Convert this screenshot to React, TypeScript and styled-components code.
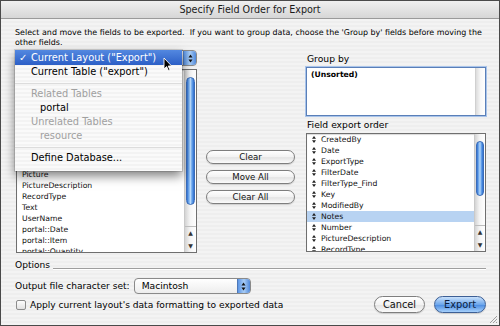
import styled, { createGlobalStyle } from "styled-components";

const GlobalStyle = createGlobalStyle`
  html, body {
    margin: 0;
    padding: 0;
    background: #3a3a3a;
  }
  * {
    box-sizing: border-box;
  }
`;

const FONT = `"DejaVu Sans", "Open Sans", sans-serif`;

const Window = styled.div`
  position: relative;
  width: 500px;
  height: 326px;
  border: 1px solid #4a4a4a;
  display: flex;
  flex-direction: column;
  font-family: ${FONT};
  color: #000;
  overflow: hidden;
  background: repeating-linear-gradient(
    to bottom,
    #eeeeee 0px,
    #eeeeee 2px,
    #f3f3f3 2px,
    #f3f3f3 4px
  );
`;

const TitleBar = styled.div`
  height: 18px;
  line-height: 18px;
  text-align: center;
  font-size: 9.6px;
  color: #1a1a1a;
  background: linear-gradient(to bottom, #f0f0f0, #d6d6d6);
  border-bottom: 1px solid #9a9a9a;
`;

const Body = styled.div`
  flex: 1;
  padding: 9px 13px 0 14px;
  display: flex;
  flex-direction: column;
`;

const Intro = styled.p`
  margin: 0;
  font-size: 7.95px;
  line-height: 10px;
  white-space: nowrap;
`;

const Columns = styled.div`
  display: flex;
  margin-top: 2px;
`;

const LeftColumn = styled.div`
  position: relative;
  width: 182px;
  display: flex;
  flex-direction: column;
`;

const MiddleColumn = styled.div`
  width: 89px;
  margin-left: 9px;
  padding-top: 100px;
  display: flex;
  flex-direction: column;
  gap: 6px;
`;

const RightColumn = styled.div`
  width: 180px;
  margin-left: 11px;
  display: flex;
  flex-direction: column;
`;

const PopupButton = styled.div<{ $width: number }>`
  width: ${(p) => p.$width}px;
  height: 16px;
  display: flex;
  border: 1px solid #8a8a8a;
  border-radius: 4px;
  background: linear-gradient(to bottom, #ffffff, #ededed);
  overflow: hidden;
`;

const PopupLabel = styled.div`
  flex: 1;
  font-size: 9.2px;
  line-height: 14px;
  padding-left: 7px;
`;

const PopupArrows = styled.div`
  width: 13px;
  display: flex;
  flex-direction: column;
  align-items: center;
  justify-content: center;
  gap: 1px;
  background: linear-gradient(to right, #5c95e4, #a9cdf6 50%, #4f88da);
  border-left: 1px solid #4e78b8;
`;

const ArrowsIcon = () => (
  <svg width="5" height="9" viewBox="0 0 5 9">
    <path d="M2.5 0.5 L4.5 3.5 L0.5 3.5 Z" fill="#111" />
    <path d="M0.5 5.5 L4.5 5.5 L2.5 8.5 Z" fill="#111" />
  </svg>
);

const ListBox = styled.div<{ $height: number }>`
  position: relative;
  height: ${(p) => p.$height}px;
  border: 1px solid #6f6f6f;
  background: #fff;
  display: flex;
  overflow: hidden;
  box-shadow: inset 0 1px 1px rgba(0, 0, 0, 0.15);
`;

const LeftList = styled(ListBox)`
  margin-top: 3px;
  margin-left: 1px;
`;

const ListItems = styled.div`
  flex: 1;
  overflow: hidden;
`;

const Item = styled.div<{ $selected?: boolean }>`
  height: 11px;
  line-height: 11px;
  font-size: 7.7px;
  padding-left: 5px;
  white-space: nowrap;
  display: flex;
  align-items: center;
  gap: 5px;
  color: #111;
  background: ${(p) => (p.$selected ? "#b8d3f2" : "transparent")};
`;

const Handle = () => (
  <svg width="4" height="7" viewBox="0 0 4 7">
    <path d="M2 0 L4 2.8 L0 2.8 Z" fill="#222" />
    <path d="M0 4.2 L4 4.2 L2 7 Z" fill="#222" />
  </svg>
);

const Track = styled.div<{ $width: number }>`
  width: ${(p) => p.$width}px;
  display: flex;
  flex-direction: column;
  align-items: center;
  border-left: 1px solid #c9c9c9;
  background: linear-gradient(to right, #d4d4d4, #f4f4f4 45%, #ffffff);
`;

const Thumb = styled.div<{ $top: number; $height: number }>`
  margin-top: ${(p) => p.$top}px;
  height: ${(p) => p.$height}px;
  width: calc(100% - 2px);
  border-radius: 6px;
  border: 1px solid #3a6cb8;
  background: linear-gradient(
    to right,
    #2f6fd0,
    #7db3f0 30%,
    #b9dafb 50%,
    #6aa6ec 70%,
    #2f6fd0
  );
`;

const TrackArrows = styled.div`
  margin-top: auto;
  height: 26px;
  width: 100%;
  display: flex;
  flex-direction: column;
  align-items: center;
  justify-content: space-around;
  border-top: 1px solid #bdbdbd;
  font-size: 6px;
  color: #333;
  line-height: 1;
`;

const Menu = styled.div`
  position: absolute;
  top: 0;
  left: 0;
  width: 167px;
  height: 121px;
  background: repeating-linear-gradient(
    to bottom,
    #fafafa 0px,
    #fafafa 2px,
    #f3f3f3 2px,
    #f3f3f3 4px
  );
  box-shadow: 0 5px 10px rgba(0, 0, 0, 0.5), 0 0 0 1px rgba(0, 0, 0, 0.12);
  z-index: 2;
`;

const MenuItem = styled.div<{ $active?: boolean; $disabled?: boolean; $indent?: boolean }>`
  height: ${(p) => (p.$active ? 15 : 14)}px;
  line-height: ${(p) => (p.$active ? 15 : 14)}px;
  font-size: 9.8px;
  padding-left: ${(p) => (p.$indent ? 25 : 16)}px;
  white-space: nowrap;
  position: relative;
  color: ${(p) => (p.$active ? "#fff" : p.$disabled ? "#a0a0a0" : "#000")};
  background: ${(p) =>
    p.$active ? "linear-gradient(to bottom, #5388e0, #2c5fc6)" : "transparent"};
`;

const Check = styled.span`
  position: absolute;
  left: 4px;
`;

const MenuSeparator = styled.div`
  height: 8px;
  display: flex;
  align-items: center;
  &::after {
    content: "";
    flex: 1;
    height: 1px;
    background: #dcdcdc;
  }
`;

const Cursor = styled.svg`
  position: absolute;
  left: 148px;
  top: 7px;
  z-index: 3;
`;

const PillButton = styled.div<{ $default?: boolean; $width?: number }>`
  height: ${(p) => (p.$width ? 17 : 14)}px;
  width: ${(p) => (p.$width ? `${p.$width}px` : "100%")};
  border-radius: 9px;
  border: 1px solid ${(p) => (p.$default ? "#3d5f95" : "#7e7e7e")};
  display: flex;
  align-items: center;
  justify-content: center;
  font-size: ${(p) => (p.$width ? 9.8 : 8.6)}px;
  color: ${(p) => (p.$default ? "#0c1d3c" : "#111")};
  background: ${(p) =>
    p.$default
      ? "linear-gradient(to bottom, #c9e1fb, #6ea7ec 50%, #4f8fe3 55%, #a6d0fb)"
      : "linear-gradient(to bottom, #ffffff, #f2f2f2 50%, #e4e4e4 55%, #fbfbfb)"};
  box-shadow: 0 1px 1px rgba(0, 0, 0, 0.15);
`;

const Label = styled.div<{ $top?: number }>`
  font-size: 9.2px;
  height: 12px;
  line-height: 12px;
  margin-top: ${(p) => p.$top ?? 0}px;
  margin-bottom: 2px;
  padding-left: 1px;
`;

const GroupBox = styled.div`
  height: 49px;
  border: 1px solid #5a7fb8;
  background: #fff;
  display: flex;
  box-shadow: 0 0 0 1px #a9c4ea;
`;

const GroupText = styled.div`
  flex: 1;
  font-size: 7.7px;
  font-weight: 700;
  padding: 2px 0 0 4px;
`;

const EmptyTrack = styled.div`
  width: 10px;
  border-left: 1px solid #d0d0d0;
  background: linear-gradient(to right, #dcdcdc, #f7f7f7 50%, #ffffff);
`;

const OptionsRow = styled.div`
  margin-top: 6px;
  height: 12px;
  display: flex;
  align-items: center;
  gap: 3px;
  font-size: 9.1px;
  &::after {
    content: "";
    flex: 1;
    height: 1px;
    margin-top: 7px;
    background: #9e9e9e;
    box-shadow: 0 1px 0 #ffffff;
  }
`;

const CharsetRow = styled.div`
  margin-top: 7px;
  display: flex;
  align-items: center;
  gap: 4px;
  font-size: 9.1px;
`;

const BottomRow = styled.div`
  margin-top: 2px;
  display: flex;
  align-items: center;
  gap: 9px;
  font-size: 9.1px;
`;

const CheckBox = styled.div`
  width: 10px;
  height: 10px;
  margin-left: 1px;
  border: 1px solid #8c8c8c;
  border-radius: 2px;
  background: linear-gradient(to bottom, #fdfdfd, #e2e2e2);
`;

const CheckLabel = styled.span`
  margin-left: -5px;
  flex: 1;
`;

const Grip = styled.svg`
  position: absolute;
  right: 1px;
  bottom: 1px;
`;

const leftFields = [
  "CreatedBy",
  "Date",
  "ExportType",
  "FilterDate",
  "FilterType_Find",
  "Key",
  "ModifiedBy",
  "Notes",
  "Number",
  "Picture",
  "PictureDescription",
  "RecordType",
  "Text",
  "UserName",
  "portal::Date",
  "portal::Item",
  "portal::Quantity",
];

const exportFields = [
  "CreatedBy",
  "Date",
  "ExportType",
  "FilterDate",
  "FilterType_Find",
  "Key",
  "ModifiedBy",
  "Notes",
  "Number",
  "PictureDescription",
  "RecordType",
];

const App = () => {
  return (
    <>
      <GlobalStyle />
      <Window>
        <TitleBar>Specify Field Order for Export</TitleBar>
        <Body>
          <Intro>
            Select and move the fields to be exported.&nbsp; If you want to group data, choose the
            'Group by' fields before moving the
            <br />
            other fields.
          </Intro>
          <Columns>
            <LeftColumn>
              <PopupButton $width={182}>
                <PopupLabel>Current Layout ("Export")</PopupLabel>
                <PopupArrows>
                  <ArrowsIcon />
                </PopupArrows>
              </PopupButton>
              <Menu>
                <MenuItem $active>
                  <Check>✓</Check>Current Layout ("Export")
                </MenuItem>
                <MenuItem>Current Table ("export")</MenuItem>
                <MenuSeparator />
                <MenuItem $disabled>Related Tables</MenuItem>
                <MenuItem $indent>portal</MenuItem>
                <MenuItem $disabled>Unrelated Tables</MenuItem>
                <MenuItem $disabled $indent>
                  resource
                </MenuItem>
                <MenuSeparator />
                <MenuItem>Define Database...</MenuItem>
              </Menu>
              <Cursor width="10" height="15" viewBox="0 0 10 15">
                <path
                  d="M1 1 L1 12 L3.6 9.6 L5.4 13.6 L7 12.9 L5.2 9 L8.6 9 Z"
                  fill="#000"
                  stroke="#fff"
                  strokeWidth="0.9"
                />
              </Cursor>
              <LeftList $height={184}>
                <ListItems>
                  {leftFields.map((f) => (
                    <Item key={f}>{f}</Item>
                  ))}
                </ListItems>
                <Track $width={12}>
                  <Thumb $top={7} $height={128} />
                  <TrackArrows>
                    <span>▲</span>
                    <span>▼</span>
                  </TrackArrows>
                </Track>
              </LeftList>
            </LeftColumn>
            <MiddleColumn>
              <PillButton>Clear</PillButton>
              <PillButton>Move All</PillButton>
              <PillButton>Clear All</PillButton>
            </MiddleColumn>
            <RightColumn>
              <Label $top={3}>Group by</Label>
              <GroupBox>
                <GroupText>(Unsorted)</GroupText>
                <EmptyTrack />
              </GroupBox>
              <Label $top={3}>Field export order</Label>
              <ListBox $height={119}>
                <ListItems>
                  {exportFields.map((f) => (
                    <Item key={f} $selected={f === "Notes"}>
                      <Handle />
                      {f}
                    </Item>
                  ))}
                </ListItems>
                <Track $width={11}>
                  <Thumb $top={7} $height={55} />
                  <TrackArrows>
                    <span>▲</span>
                    <span>▼</span>
                  </TrackArrows>
                </Track>
              </ListBox>
            </RightColumn>
          </Columns>
          <OptionsRow>Options</OptionsRow>
          <CharsetRow>
            Output file character set:
            <PopupButton $width={117}>
              <PopupLabel>Macintosh</PopupLabel>
              <PopupArrows>
                <ArrowsIcon />
              </PopupArrows>
            </PopupButton>
          </CharsetRow>
          <BottomRow>
            <CheckBox />
            <CheckLabel>Apply current layout's data formatting to exported data</CheckLabel>
            <PillButton $width={51}>Cancel</PillButton>
            <PillButton $width={52} $default>
              Export
            </PillButton>
          </BottomRow>
        </Body>
        <Grip width="10" height="10" viewBox="0 0 10 10">
          <path d="M9 2 L2 9 M9 5 L5 9 M9 8 L8 9" stroke="#8a8a8a" strokeWidth="0.8" />
        </Grip>
      </Window>
    </>
  );
};

export default App;
